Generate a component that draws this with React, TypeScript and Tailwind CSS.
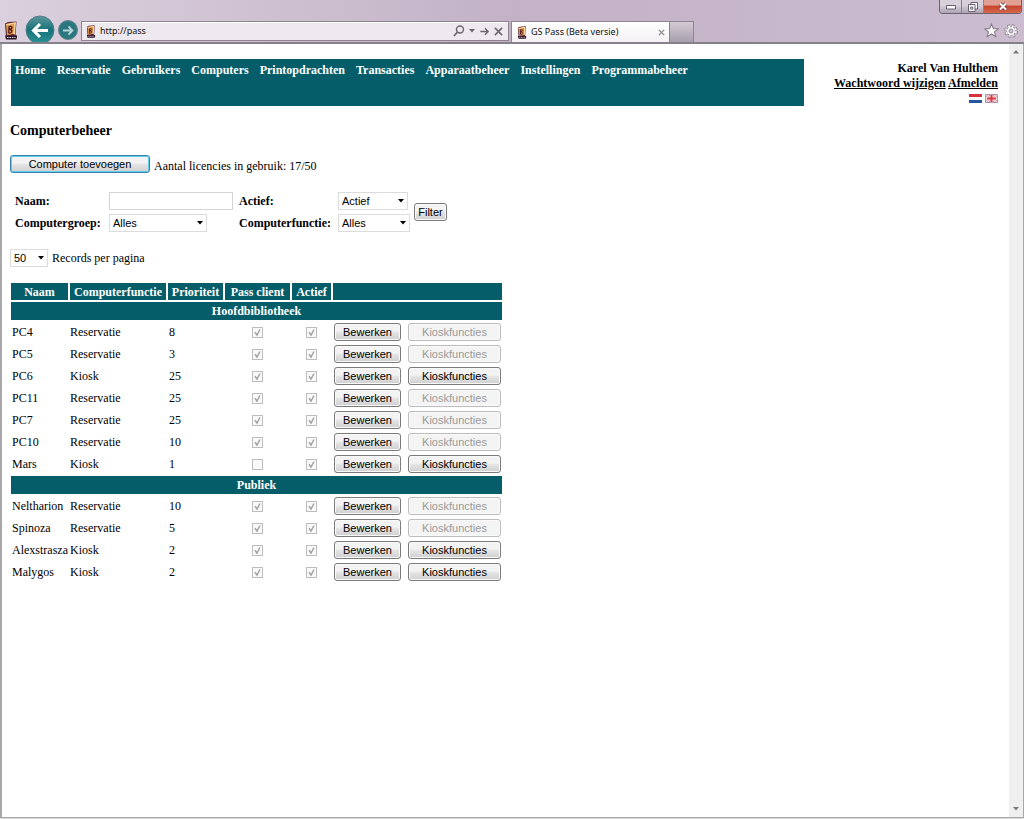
import React from 'react';

interface Computer {
  name: string;
  role: 'Reservatie' | 'Kiosk';
  priority: number;
  passClient: boolean;
}

interface Group {
  title: string;
  computers: Computer[];
}

const MENU = [
  'Home',
  'Reservatie',
  'Gebruikers',
  'Computers',
  'Printopdrachten',
  'Transacties',
  'Apparaatbeheer',
  'Instellingen',
  'Programmabeheer',
];

const GROUPS: Group[] = [
  {
    title: 'Hoofdbibliotheek',
    computers: [
      { name: 'PC4', role: 'Reservatie', priority: 8, passClient: true },
      { name: 'PC5', role: 'Reservatie', priority: 3, passClient: true },
      { name: 'PC6', role: 'Kiosk', priority: 25, passClient: true },
      { name: 'PC11', role: 'Reservatie', priority: 25, passClient: true },
      { name: 'PC7', role: 'Reservatie', priority: 25, passClient: true },
      { name: 'PC10', role: 'Reservatie', priority: 10, passClient: true },
      { name: 'Mars', role: 'Kiosk', priority: 1, passClient: false },
    ],
  },
  {
    title: 'Publiek',
    computers: [
      { name: 'Neltharion', role: 'Reservatie', priority: 10, passClient: true },
      { name: 'Spinoza', role: 'Reservatie', priority: 5, passClient: true },
      { name: 'Alexstrasza', role: 'Kiosk', priority: 2, passClient: true },
      { name: 'Malygos', role: 'Kiosk', priority: 2, passClient: true },
    ],
  },
];

const PassIcon: React.FC<{ className: string }> = ({ className }) => (
  <svg viewBox="0 0 14 19" className={className} aria-hidden="true">
    <path d="M1 2.5 4 1 12.5 0.5 11.5 14.5 13 15V17L2 15.5Z" fill="#5b2434" />
    <path d="M2 3 10 1.5 9 13 3 14.5Z" fill="#dd9147" />
    <path d="M10 1.5 12 1 11 13.5 9 13Z" fill="#f8d596" />
    <path d="M2 3 10 1.5 9.8 3 2.2 4.5Z" fill="#f8d596" />
    <path d="M5 5.5 4.8 12M4.5 6C9 4 9 8.2 5 8.5C9.3 8 8.5 12.5 4.5 12" fill="none" stroke="#3d1520" strokeWidth="1.2" />
    <path d="M1 14.5H13L12.5 18.5H2Z" fill="#2b1626" />
    <path d="M3 16.5H11.5" stroke="#d9c7dc" strokeWidth="1.2" strokeDasharray="1.6 .8" />
  </svg>
);

const AddressBar = () => (
  <div className="flex h-[20px] w-[428px] items-center border border-[#8d8391] bg-[#eee8ef] pr-[5px] pl-1 shadow-[inset_0_1px_0_#fff]">
    <PassIcon className="h-[13px] w-[10px]" />
    <input
      aria-label="Adres"
      defaultValue="http://pass"
      className="ml-1 min-w-0 flex-1 bg-transparent font-['Noto_Sans','Open_Sans',sans-serif] text-[9px] leading-[14px] text-[#111] outline-none"
    />
    <button aria-label="Zoeken">
      <svg viewBox="0 0 12 12" className="size-3" fill="none" stroke="#6c6570" strokeWidth="1.4">
        <circle cx="7" cy="4.5" r="3.5" />
        <path d="M4.5 7 1 11" strokeWidth="1.8" />
      </svg>
    </button>
    <button aria-label="Suggesties" className="ml-1">
      <svg viewBox="0 0 6 4" className="h-1 w-[6px]"><path d="M0 0H6L3 3.5Z" fill="#6c6570" /></svg>
    </button>
    <button aria-label="Ga naar" className="ml-1">
      <svg viewBox="0 0 12 12" className="size-[11px]" fill="none" stroke="#6c6570" strokeWidth="1.5">
        <path d="M1.5 6H10M6.5 2.5 10 6 6.5 9.5" />
      </svg>
    </button>
    <button aria-label="Stoppen" className="ml-1">
      <svg viewBox="0 0 10 10" className="size-[9px]" fill="none" stroke="#6c6570" strokeWidth="1.7">
        <path d="M1 1 9 9M9 1 1 9" />
      </svg>
    </button>
  </div>
);

const WindowButtons = () => (
  <div className="absolute top-0 right-[2px] flex h-[14px] w-[83px] overflow-hidden rounded-b-[4px] border border-t-0 border-[#6d6472]">
    <button aria-label="Minimaliseren" className="flex w-[22px] items-center justify-center border-r border-[#8a818e] bg-linear-to-b from-[#d8d0db] from-40% to-[#ada2b1]">
      <svg viewBox="0 0 10 5" className="mt-[2px] h-[5px] w-[10px]"><path d="M.5 .5H9.5V4H.5Z" fill="#fff" stroke="#666070" /></svg>
    </button>
    <button aria-label="Vorig formaat" className="flex w-[22px] items-center justify-center border-r border-[#8a818e] bg-linear-to-b from-[#d8d0db] from-40% to-[#ada2b1]">
      <svg viewBox="0 0 10 10" className="size-[10px]" fill="#fff" stroke="#666070">
        <path d="M3 .5H9.5V7H3Z" />
        <path d="M.5 2.5H7V9.5H.5Z" />
        <path d="M2.7 5H4.8V7.2H2.7Z" />
      </svg>
    </button>
    <button aria-label="Sluiten" className="flex flex-1 items-center justify-center bg-linear-to-b from-[#e0a093] from-35% via-[#c8452e] via-50% to-[#d5694e]">
      <svg viewBox="0 0 10 9" className="h-[9px] w-[10px]">
        <path d="M2 1.5 8 7.5M8 1.5 2 7.5" stroke="#734047" strokeWidth="3.6" />
        <path d="M2 1.5 8 7.5M8 1.5 2 7.5" stroke="#fff" strokeWidth="2" />
      </svg>
    </button>
  </div>
);

const BrowserBar = () => (
  <header className="relative flex h-[44px] shrink-0 items-start border-b-2 border-[#85808a] bg-linear-to-r from-[#dbd0dd] via-[#c3b2c6] via-50% to-[#ccbcd0]">
    <PassIcon className="mt-[21px] ml-1 h-[19px] w-[14px] shrink-0" />
    <button aria-label="Terug" className="mt-[15px] ml-[7px] shrink-0">
      <svg viewBox="0 0 30 27" className="h-[27px] w-[30px]">
        <defs>
          <linearGradient id="back" x1="0" y1="0" x2="0" y2="1">
            <stop offset="0" stopColor="#5d969c" />
            <stop offset=".5" stopColor="#17737b" />
            <stop offset="1" stopColor="#2a9298" />
          </linearGradient>
        </defs>
        <circle cx="15" cy="15" r="14" fill="url(#back)" stroke="#55808a" />
        <path d="M23 15.5H9.5M15 9 8.5 15.5 15 22" fill="none" stroke="#fff" strokeWidth="3" />
      </svg>
    </button>
    <button aria-label="Vooruit" className="mt-[20px] ml-[3px] shrink-0">
      <svg viewBox="0 0 20 20" className="size-5">
        <circle cx="10" cy="10" r="9.5" fill="#2b777f" stroke="#63868e" />
        <path d="M5 10.5H14.5M10.5 6.5 14.5 10.5 10.5 14.5" fill="none" stroke="#b7d5d7" strokeWidth="1.8" />
      </svg>
    </button>
    <div className="mt-[21px] ml-[3px] shrink-0">
      <AddressBar />
    </div>
    <div className="mt-[21px] ml-[2px] flex h-[21px] w-[159px] shrink-0 items-center border border-b-0 border-[#8d8391] bg-linear-to-b from-white to-[#f4f1f5] px-1">
      <PassIcon className="ml-px h-[13px] w-[10px]" />
      <span className="ml-1 flex-1 font-['Noto_Sans','Open_Sans',sans-serif] text-[9px] leading-[14px] whitespace-nowrap text-[#111]">
        GS Pass (Beta versie)
      </span>
      <button aria-label="Tabblad sluiten">
        <svg viewBox="0 0 8 8" className="size-[7px]"><path d="M1 1 7 7M7 1 1 7" stroke="#918b94" strokeWidth="1.6" /></svg>
      </button>
    </div>
    <button
      aria-label="Nieuw tabblad"
      className="mt-[21px] h-[21px] w-[24px] shrink-0 border border-b-0 border-l-0 border-[#8d8391] bg-linear-to-b from-[#d3cad6] to-[#a79fab]"
    />
    <div className="mt-[23px] mr-[6px] ml-auto flex items-center gap-[5px]">
      <button aria-label="Favorieten">
        <svg viewBox="0 0 16 16" className="size-[15px]">
          <path d="M8 1 10 6 15 6.2 11.2 9.5 12.6 14.5 8 11.7 3.4 14.5 4.8 9.5 1 6.2 6 6Z" fill="#fff" stroke="#827986" strokeWidth="1.1" />
        </svg>
      </button>
      <button aria-label="Extra">
        <svg viewBox="0 0 14 14" className="size-[14px]">
          <circle cx="7" cy="7" r="5.2" fill="none" stroke="#827986" strokeWidth="3.2" strokeDasharray="2.4 1.68" />
          <circle cx="7" cy="7" r="4.4" fill="#fff" stroke="#827986" strokeWidth=".8" />
          <circle cx="7" cy="7" r="5" fill="none" stroke="#fff" strokeWidth="1.8" strokeDasharray="1.8 2.13" strokeDashoffset="-.3" />
          <circle cx="7" cy="7" r="2" fill="#d3c6d7" stroke="#827986" strokeWidth=".9" />
        </svg>
      </button>
    </div>
    <WindowButtons />
  </header>
);

const ScrollBar = () => (
  <div className="flex w-[14px] shrink-0 flex-col justify-between bg-[#efefef]">
    <button aria-label="Omhoog" className="flex h-4 items-center justify-center">
      <svg viewBox="0 0 6 4" className="h-1 w-[6px]"><path d="M0 3.5H6L3 0Z" fill="#777" /></svg>
    </button>
    <button aria-label="Omlaag" className="flex h-4 items-center justify-center">
      <svg viewBox="0 0 6 4" className="h-1 w-[6px]"><path d="M0 0H6L3 3.5Z" fill="#777" /></svg>
    </button>
  </div>
);

interface DropDownProps {
  id: string;
  options: string[];
  className: string;
}

const DropDown: React.FC<DropDownProps> = ({ id, options, className }) => (
  <div className={`relative h-[18px] ${className}`}>
    <select
      id={id}
      className="block h-full w-full appearance-none border border-[#dcdcdc] bg-white pl-[3px] font-['Liberation_Sans',sans-serif] text-[11px] leading-4 font-normal text-black"
    >
      {options.map((option) => (
        <option key={option}>{option}</option>
      ))}
    </select>
    <svg viewBox="0 0 6 4" className="pointer-events-none absolute top-[7px] right-1 h-1 w-[6px]">
      <path d="M0 0H6L3 3.5Z" fill="#000" />
    </svg>
  </div>
);

interface ButtonProps extends React.ComponentProps<'button'> {
  primary?: boolean;
}

const Button: React.FC<ButtonProps> = ({ primary = false, className = '', ...props }) => {
  const frame = primary
    ? 'border-[#3c7fb1] shadow-[inset_0_0_0_1px_#62cdea]'
    : 'border-[#7b7b7b] shadow-[inset_0_0_0_1px_#fafafa]';

  return (
    <button
      className={`block h-[18px] rounded-[3px] border bg-linear-to-b from-[#f3f3f3] from-45% via-[#e6e6e6] via-50% to-[#cfcfcf] font-['Liberation_Sans',sans-serif] text-[11px] leading-[15px] font-normal text-black disabled:border-[#bcbcbc] disabled:bg-[#f4f4f4] disabled:bg-none disabled:text-[#9b9b9b] ${frame} ${className}`}
      {...props}
    />
  );
};

const Check: React.FC<{ checked: boolean; label: string }> = ({ checked, label }) => (
  <span className="relative mx-auto block size-[11px]">
    <input
      type="checkbox"
      disabled
      checked={checked}
      readOnly
      aria-label={label}
      className="block size-[11px] appearance-none border border-[#bdbdbd] bg-[#f9f9f9]"
    />
    {checked && (
      <svg viewBox="0 0 11 11" className="pointer-events-none absolute inset-0 size-[11px]">
        <path d="M3 5.2 5 8 8 2.5" fill="none" stroke="#a3a3a3" strokeWidth="1.5" />
      </svg>
    )}
  </span>
);

const Flags = () => (
  <div className="flex h-[15px] items-center justify-end gap-[3px]">
    <button aria-label="Nederlands">
      <svg viewBox="0 0 13 9" className="h-[9px] w-[13px]">
        <path d="M0 0H13V3H0Z" fill="#d8323c" />
        <path d="M0 3H13V6H0Z" fill="#fff" />
        <path d="M0 6H13V9H0Z" fill="#2454a4" />
      </svg>
    </button>
    <button aria-label="English">
      <svg viewBox="0 0 13 9" className="h-[9px] w-[13px]">
        <path d="M0 0H13V9H0Z" fill="#8d84aa" />
        <path d="M0 0 13 9M13 0 0 9" stroke="#fff" strokeWidth="2" />
        <path d="M0 0 13 9M13 0 0 9" stroke="#e2858c" strokeWidth=".8" />
        <path d="M6.5 0V9M0 4.5H13" stroke="#f7dfe2" strokeWidth="3.4" />
        <path d="M6.5 1V8M2 4.5H11" stroke="#dc3944" strokeWidth="2" />
        <path d="M.5 .5H12.5V8.5H.5Z" fill="none" stroke="#a88da6" strokeWidth=".8" />
      </svg>
    </button>
  </div>
);

const FilterForm = () => (
  <form className="mt-[18px] ml-[5px] grid grid-cols-[94px_130px_99px_76px_auto] grid-rows-[18px_18px] items-center justify-start gap-y-1 font-bold">
    <label htmlFor="naam">Naam:</label>
    <input id="naam" type="text" className="h-[18px] w-[124px] border border-[#d4d4d4] px-1 font-['Liberation_Sans',sans-serif] text-[11px] font-normal" />
    <label htmlFor="actief">Actief:</label>
    <DropDown id="actief" options={['Actief', 'Inactief', 'Alles']} className="w-[70px]" />
    <Button type="button" className="row-span-2 w-[33px]">Filter</Button>
    <label htmlFor="groep">Computergroep:</label>
    <DropDown id="groep" options={['Alles', 'Hoofdbibliotheek', 'Publiek']} className="w-[98px]" />
    <label htmlFor="functie">Computerfunctie:</label>
    <DropDown id="functie" options={['Alles', 'Reservatie', 'Kiosk']} className="w-[72px]" />
  </form>
);

const ComputerTable = () => (
  <table className="mt-[14px] -ml-px w-[495px] table-fixed border-separate border-spacing-[2px] leading-[16px]">
    <colgroup>
      <col className="w-[57px]" />
      <col className="w-[96px]" />
      <col className="w-[55px]" />
      <col className="w-[65px]" />
      <col className="w-[39px]" />
      <col />
    </colgroup>
    <thead>
      <tr className="h-[17px] bg-[#045d68] text-white">
        <th className="p-0">Naam</th>
        <th className="p-0">Computerfunctie</th>
        <th className="p-0">Prioriteit</th>
        <th className="p-0">Pass client</th>
        <th className="p-0">Actief</th>
        <th className="p-0" aria-label="Acties" />
      </tr>
    </thead>
    {GROUPS.map((group) => (
      <tbody key={group.title}>
        <tr className="h-[18px] bg-[#045d68] text-white">
          <th colSpan={6} className="p-0">{group.title}</th>
        </tr>
        {group.computers.map((computer) => (
          <tr key={computer.name} className="h-5">
            <td className="p-0 pl-px whitespace-nowrap">{computer.name}</td>
            <td className="p-0">{computer.role}</td>
            <td className="p-0 pl-px">{computer.priority}</td>
            <td className="p-0">
              <Check checked={computer.passClient} label={`Pass client ${computer.name}`} />
            </td>
            <td className="p-0">
              <Check checked label={`Actief ${computer.name}`} />
            </td>
            <td className="p-0">
              <div className="flex justify-between px-px">
                <Button className="w-[67px]">Bewerken</Button>
                <Button className="w-[93px]" disabled={computer.role !== 'Kiosk'}>Kioskfuncties</Button>
              </div>
            </td>
          </tr>
        ))}
      </tbody>
    ))}
  </table>
);

export default function App() {
  return (
    <div className="flex min-h-screen flex-col bg-[#d9d9d9] font-['Liberation_Serif',serif] text-[12px] leading-[15px] text-black">
      <BrowserBar />
      <div className="mb-px flex flex-1 border-r border-b border-l-2 border-[#aaa7ab] bg-white">
        <main className="min-w-0 flex-1 pt-[15px] pr-[11px] pl-2">
          <div className="ml-px flex items-start">
            <nav className="flex h-[47px] flex-1 gap-[11px] bg-[#045d68] pt-[3px] pl-1 leading-4 font-bold text-white">
              {MENU.map((item) => (
                <a key={item} href="#">{item}</a>
              ))}
            </nav>
            <div className="w-[194px] shrink-0 pt-[2px] text-right font-bold">
              <div>Karel Van Hulthem</div>
              <div>
                <a href="#" className="underline">Wachtwoord wijzigen</a>{' '}
                <a href="#" className="underline">Afmelden</a>
              </div>
              <Flags />
            </div>
          </div>

          <h1 className="mt-4 text-[14px] leading-[18px] font-bold">Computerbeheer</h1>

          <div className="mt-[15px] flex items-start gap-1">
            <Button primary className="w-[140px]">Computer toevoegen</Button>
            <span className="pt-1">Aantal licencies in gebruik: 17/50</span>
          </div>

          <FilterForm />

          <div className="mt-[17px] flex items-center gap-1">
            <DropDown id="records" options={['50', '100', '200']} className="w-[38px]" />
            <label htmlFor="records">Records per pagina</label>
          </div>

          <ComputerTable />
        </main>
        <ScrollBar />
      </div>
    </div>
  );
}
